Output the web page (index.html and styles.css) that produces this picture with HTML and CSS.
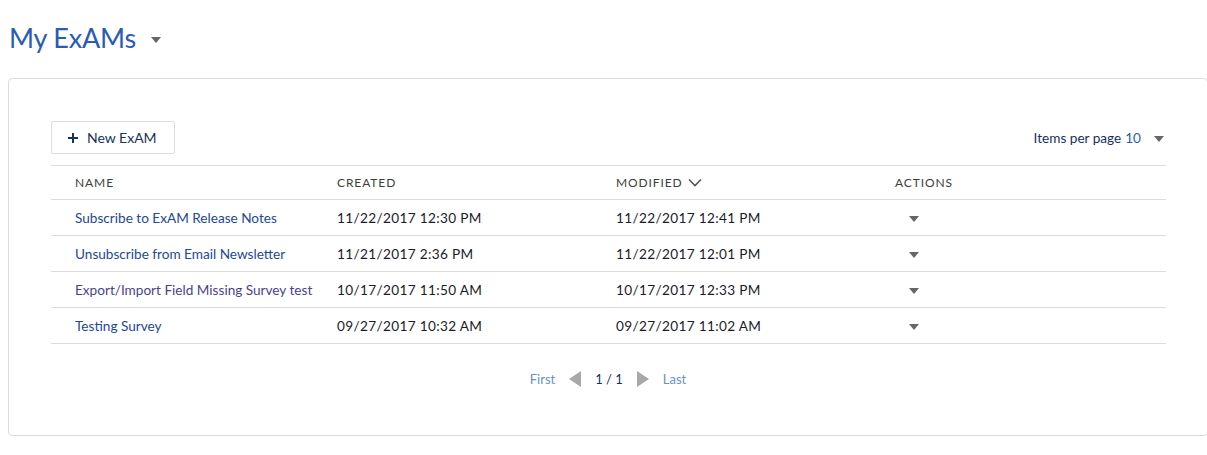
FILE: index.html
```html
<!DOCTYPE html>
<html>
<head>
<meta charset="utf-8">
<link rel="stylesheet" href="styles.css">
</head>
<body>
<div class="page">
  <div class="title-row">
    <h1 class="title">My ExAMs</h1>
    <span class="caret title-caret"></span>
  </div>
  <div class="card">
    <div class="toolbar">
      <button class="new-btn"><svg class="plus" width="10" height="10" viewBox="0 0 10 10"><path d="M4 0h2v4h4v2H6v4H4V6H0V4h4z" fill="#16325c"/></svg>New ExAM</button>
      <div class="per-page">Items per page <span class="num">10</span><span class="caret pp-caret"></span></div>
    </div>
    <div class="table">
      <div class="row head">
        <div class="c c1">NAME</div>
        <div class="c c2">CREATED</div>
        <div class="c c3">MODIFIED <svg class="chev" width="14" height="9" viewBox="0 0 14 9"><path d="M1 1.5l6 6 6-6" fill="none" stroke="#555" stroke-width="1.6"/></svg></div>
        <div class="c c4">ACTIONS</div>
      </div>
      <div class="row">
        <div class="c c1"><a class="link">Subscribe to ExAM Release Notes</a></div>
        <div class="c c2 date">11/22/2017 12:30 PM</div>
        <div class="c c3 date">11/22/2017 12:41 PM</div>
        <div class="c c4"><span class="caret act"></span></div>
      </div>
      <div class="row">
        <div class="c c1"><a class="link">Unsubscribe from Email Newsletter</a></div>
        <div class="c c2 date">11/21/2017 2:36 PM</div>
        <div class="c c3 date">11/22/2017 12:01 PM</div>
        <div class="c c4"><span class="caret act"></span></div>
      </div>
      <div class="row">
        <div class="c c1"><a class="link visited">Export/Import Field Missing Survey test</a></div>
        <div class="c c2 date">10/17/2017 11:50 AM</div>
        <div class="c c3 date">10/17/2017 12:33 PM</div>
        <div class="c c4"><span class="caret act"></span></div>
      </div>
      <div class="row">
        <div class="c c1"><a class="link">Testing Survey</a></div>
        <div class="c c2 date">09/27/2017 10:32 AM</div>
        <div class="c c3 date">09/27/2017 11:02 AM</div>
        <div class="c c4"><span class="caret act"></span></div>
      </div>
    </div>
    <div class="pager">
      <span class="pg-link">First</span>
      <span class="tri-left"></span>
      <span class="pg-num">1 / 1</span>
      <span class="tri-right"></span>
      <span class="pg-link">Last</span>
    </div>
  </div>
</div>
</body>
</html>
```
FILE: styles.css
```css
html, body {
  margin: 0;
  padding: 0;
  background: #fff;
  overflow: hidden;
}
body {
  font-family: Lato, "Open Sans", sans-serif;
  color: #16325c;
}
.page {
  padding: 0 0 0 8px;
  width: 1200px;
}
.title-row {
  display: flex;
  align-items: center;
  height: 78px;
  padding-left: 1px;
}
.title {
  margin: 0;
  font-weight: 400;
  font-size: 27px;
  color: #2a5cb5;
  letter-spacing: -0.2px;
  line-height: 1;
  margin-top: -4px;
}
.caret {
  display: inline-block;
  width: 0;
  height: 0;
  border-left: 5px solid transparent;
  border-right: 5px solid transparent;
  border-top: 6px solid #666;
}
.title-caret {
  margin-left: 15px;
  margin-top: 1px;
}
.card {
  box-sizing: border-box;
  width: 1200px;
  height: 358px;
  border: 1px solid #dcdcdc;
  border-radius: 4px;
  padding: 42px 41px 0 42px;
}
.toolbar {
  display: flex;
  justify-content: space-between;
  align-items: center;
  height: 33px;
  margin-bottom: 11px;
}
.new-btn {
  box-sizing: border-box;
  height: 33px;
  width: 124px;
  border: 1px solid #d8dde6;
  background: #fff;
  border-radius: 2px;
  font-family: inherit;
  font-size: 14px;
  color: #16325c;
  display: flex;
  align-items: center;
  padding: 0 0 0 16px;
}
.plus {
  margin-right: 9px;
}
.per-page {
  font-size: 13.6px;
  color: #16325c;
  display: flex;
  align-items: center;
  padding-right: 2px;
}
.per-page .num {
  color: #2a5cb5;
  margin-left: 4px;
}
.pp-caret {
  margin-left: 13px;
  margin-top: 2px;
}
.table {
  border-top: 1px solid #dcdcdc;
}
.row {
  display: flex;
  height: 35px;
  border-bottom: 1px solid #dcdcdc;
  align-items: center;
  font-size: 13.6px;
  color: #1a1a2a;
}
.row.head {
  height: 33px;
  font-size: 12px;
  letter-spacing: 0.9px;
  color: #3e3e3c;
}
.c {
  box-sizing: border-box;
  padding-left: 24px;
  display: flex;
  align-items: center;
}
.c1 { width: 262px; }
.c2 { width: 279px; }
.c3 { width: 279px; }
.c4 { flex: 1; padding-left: 38px; }
.head .c4 { padding-left: 24px; }
.date { letter-spacing: 0.35px; }
.chev { margin-left: 5px; }
.link {
  color: #23479b;
  text-decoration: none;
}
.link.visited {
  color: #4a3f94;
}
.act {
  margin-top: 2px;
}
.pager {
  display: flex;
  justify-content: center;
  align-items: center;
  margin-top: 27px;
  font-size: 13px;
  padding-right: 1px;
}
.pg-link {
  color: #6b8fc9;
}
.pg-num {
  color: #16325c;
  margin: 0 14px;
}
.tri-left, .tri-right {
  width: 0;
  height: 0;
  border-top: 8px solid transparent;
  border-bottom: 8px solid transparent;
}
.tri-left {
  border-right: 12px solid #a8a8a8;
  margin-left: 14px;
}
.tri-right {
  border-left: 12px solid #a8a8a8;
  margin-right: 14px;
}
```
